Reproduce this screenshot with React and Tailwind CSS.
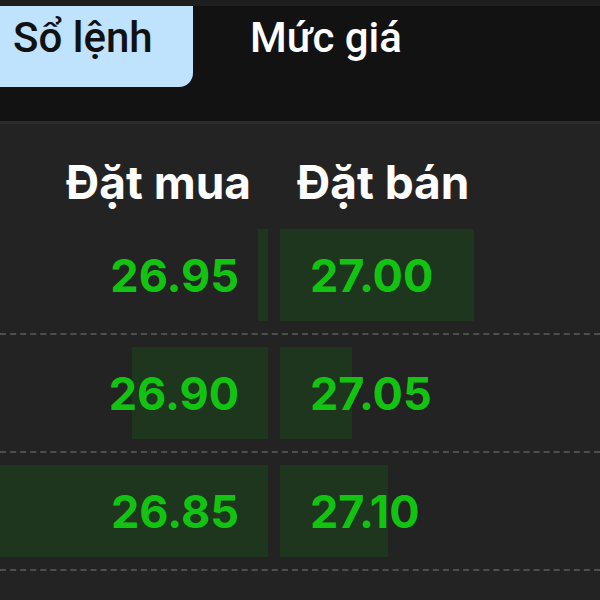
import React from 'react';

const rows = [
  { bid: '26.95', bidBar: 10, ask: '27.00', askBar: 194 },
  { bid: '26.90', bidBar: 136, ask: '27.05', askBar: 72 },
  { bid: '26.85', bidBar: 268, ask: '27.10', askBar: 108 },
];

const App = () => {
  return (
    <div className="w-[600px] h-[600px] overflow-hidden bg-[#232323] flex flex-col" style={{ fontFamily: 'Inter, "Noto Sans", sans-serif' }}>
      {/* tab bar */}
      <div className="h-[6px] bg-[#1e1e1e]" />
      <div className="h-[115px] bg-[#121212] flex items-start">
        <div className="w-[193px] h-[81px] bg-[#bfe2fd] rounded-br-[14px] pl-[13px] pt-[11px]">
          <span className="text-[42px] leading-none font-medium text-[#111]" style={{ fontFamily: 'Roboto, sans-serif' }}>Sổ lệnh</span>
        </div>
        <div className="pl-[57px] pt-[11px]">
          <span className="text-[42px] leading-none font-medium text-white" style={{ fontFamily: 'Roboto, sans-serif' }}>Mức giá</span>
        </div>
      </div>
      <div className="h-[3px] bg-[#2b2b2b]" />

      {/* order book */}
      <div className="grid grid-cols-[268px_268px] gap-x-3 h-[93px] items-end pb-[12px]">
        <div className="text-right pr-[17px] text-white font-bold text-[46px] leading-none">Đặt mua</div>
        <div className="pl-[17px] text-white font-bold text-[46px] leading-none">Đặt bán</div>
      </div>

      {rows.map((r) => (
        <div key={r.bid} className="border-b-2 border-dashed border-[#4e4e4e] py-[12px]">
          <div className="grid grid-cols-[268px_268px] gap-x-3 h-[92px]">
            <div className="relative flex items-center justify-end pr-[29px]">
              <div className="absolute right-0 top-0 bottom-0 bg-[#1e351e]" style={{ width: r.bidBar }} />
              <span className="relative text-[#12c312] font-bold text-[45px] leading-none">{r.bid}</span>
            </div>
            <div className="relative flex items-center pl-[30px]">
              <div className="absolute left-0 top-0 bottom-0 bg-[#1e351e]" style={{ width: r.askBar }} />
              <span className="relative text-[#12c312] font-bold text-[45px] leading-none">{r.ask}</span>
            </div>
          </div>
        </div>
      ))}
    </div>
  );
};

export default App;
